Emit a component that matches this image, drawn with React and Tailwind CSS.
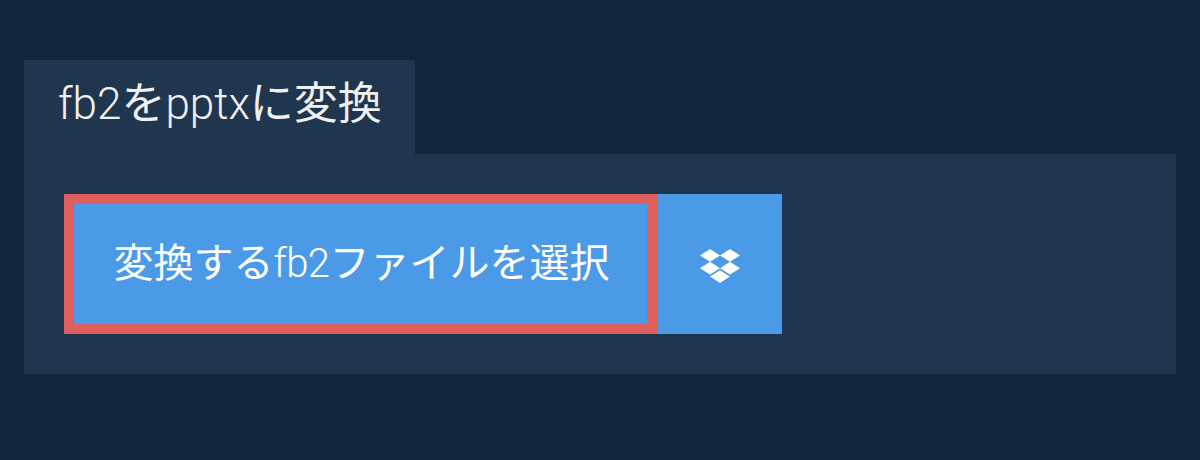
import { FaDropbox } from 'react-icons/fa'

function Latin({ children }) {
  return <span className="font-['Roboto',sans-serif] font-light">{children}</span>
}

export default function App() {
  return (
    <div className="min-h-[460px] bg-[#0f263b] pt-[60px] px-6 font-['Noto_Sans_CJK_JP',sans-serif]">
      <div className="w-[391px] h-[94px] bg-[#20364f] pl-[34px] pt-[13px] text-[44px] leading-[54px] text-[#f0f0f0] whitespace-nowrap">
        <Latin>fb2</Latin>を<Latin>pptx</Latin>に変換
      </div>
      <div className="h-[220px] bg-[#20364f] p-10 flex">
        <button className="w-[593px] h-[140px] bg-[#4b9ae8] border-[10px] border-[#de5f5c] text-[40px] text-white flex items-center justify-center pb-1 pl-[2px]">
          <span>変換する<span className="tracking-[-0.6px]"><Latin>fb2</Latin></span>ファイルを選択</span>
        </button>
        <button className="w-[125px] h-[140px] bg-[#4b9ae8] text-white flex items-center justify-center pt-1">
          <FaDropbox className="w-10 h-10" />
        </button>
      </div>
    </div>
  )
}
